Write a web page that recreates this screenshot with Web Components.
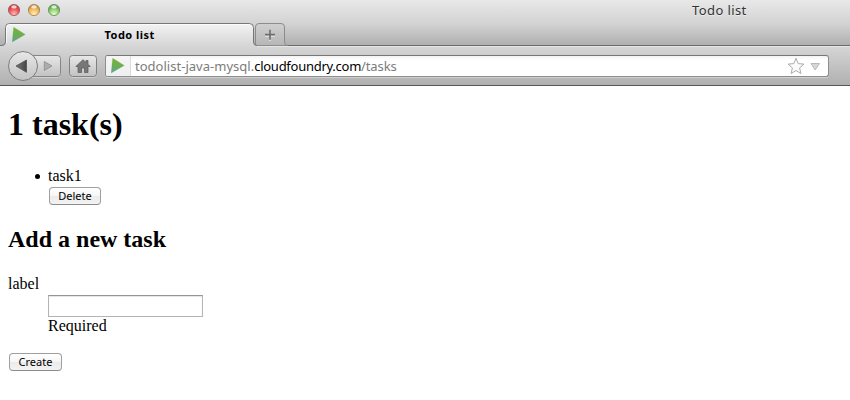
<!DOCTYPE html>
<html lang="en">
<head>
<meta charset="utf-8">
<title>Todo list</title>
<style>
html,body{margin:0;height:100%;background:#fff;overflow:hidden}
</style>
</head>
<body>
<todo-window></todo-window>
<script>
const define = (name, html) => customElements.define(name, class extends HTMLElement {
  constructor() {
    super();
    const t = document.createElement('template');
    t.innerHTML = html;
    this.attachShadow({mode: 'open'}).append(t.content.cloneNode(true));
  }
});

define('play-logo', `
<style>:host{display:block;width:14px;height:16px}svg{display:block}</style>
<svg width="14" height="16" viewBox="0 0 14 16"><defs><linearGradient id="g" x1=".4" y1="0" x2=".3" y2="1"><stop offset="0" stop-color="#79b52c"/><stop offset=".55" stop-color="#6aae55"/><stop offset="1" stop-color="#58a5a5"/></linearGradient></defs>
<path d="M1.700.2 13.200 7.400.200 15Z" fill="url(#g)" stroke="#5f9f4c" stroke-opacity=".5" stroke-width=".5"/></svg>`);

define('title-bar', `
<style>
:host{display:flex;height:23px;box-sizing:border-box;padding-left:8px;align-items:flex-start;font:13px/20px "Noto Sans","Open Sans",sans-serif;color:#333}
svg{display:block;margin-top:3px}
span{margin-left:631px;letter-spacing:.4px;white-space:nowrap;text-shadow:0 1px 0 rgba(255,255,255,.5)}
</style>
<svg width="53" height="14" viewBox="0 0 53 14"><defs>
<radialGradient id="r" cx=".5" cy=".85" r=".85"><stop offset="0" stop-color="#ffbcb8"/><stop offset=".5" stop-color="#ee5c60"/><stop offset="1" stop-color="#b8303a"/></radialGradient>
<radialGradient id="y" cx=".5" cy=".85" r=".85"><stop offset="0" stop-color="#fff3b0"/><stop offset=".5" stop-color="#f4bd66"/><stop offset="1" stop-color="#b87a30"/></radialGradient>
<radialGradient id="g" cx=".5" cy=".85" r=".85"><stop offset="0" stop-color="#e4ffc4"/><stop offset=".5" stop-color="#95d07a"/><stop offset="1" stop-color="#4c8c40"/></radialGradient></defs>
<circle cx="6" cy="7" r="5.600" fill="url(#r)" stroke="#a05054" stroke-width=".8"/>
<circle cx="26" cy="7" r="5.600" fill="url(#y)" stroke="#a47a4c" stroke-width=".8"/>
<circle cx="46" cy="7" r="5.600" fill="url(#g)" stroke="#608c56" stroke-width=".8"/>
<g fill="#fff" fill-opacity=".75"><ellipse cx="6" cy="3.900" rx="2.700" ry="1.600"/><ellipse cx="26" cy="3.900" rx="2.700" ry="1.600"/><ellipse cx="46" cy="3.900" rx="2.700" ry="1.600"/></g></svg>
<span>Todo list</span>`);

define('tab-strip', `
<style>
:host{display:grid;height:24px;grid-template-columns:850px;grid-template-rows:24px;font:bold 11px/23px "Noto Sans","Open Sans",sans-serif;color:#000}
svg,.row{grid-area:1/1}svg{display:block}
.row{display:flex;align-items:flex-start;padding-left:12px}
play-logo{margin-top:3.500px}
.t{margin-left:78.500px;letter-spacing:.480px;white-space:nowrap;line-height:24px}
</style>
<svg width="850" height="24" viewBox="0 0 850 24"><defs>
<linearGradient id="a" x2="0" y2="1"><stop offset="0" stop-color="#f3f3f3"/><stop offset="1" stop-color="#d5d5d5"/></linearGradient>
<linearGradient id="b" x2="0" y2="1"><stop offset="0" stop-color="#d0d0d0"/><stop offset="1" stop-color="#b6b6b6"/></linearGradient></defs>
<path d="M0 23.500H850" stroke="#e5e5e5"/>
<path d="M0 22.500H850" stroke="#6c6c6c"/>
<path d="M255.500 22.500V4q0-3.500 3.500-3.500H281q3.500 0 3.500 3.500V19q0 3.500 3 3.500Z" fill="url(#b)" stroke="#8c8c8c"/>
<path d="M0 24V22.500H2Q5.500 22.500 5.500 19V4.500Q5.500.500 9.500.500H249.500Q253.500.500 253.500 4.500V19Q253.500 22.500 257 22.500V24Z" fill="url(#a)"/>
<path d="M0 22.500H2Q5.500 22.500 5.500 19V4.500Q5.500.500 9.500.500H249.500Q253.500.500 253.500 4.500V19Q253.500 22.500 257 22.500" fill="none" stroke="#777"/>
<path d="M6.500 20V4.500Q6.500 1.500 9.500 1.500H249.500" fill="none" stroke="#fff" stroke-opacity=".7"/>
<path d="M265 12h10M270 7v10" stroke="#ddd" stroke-width="2" transform="translate(0 1)"/>
<path d="M265 11.700h10M270 6.700v10" stroke="#6e6e6e" stroke-width="1.700"/></svg>
<div class="row"><play-logo></play-logo><span class="t">Todo list</span></div>`);

define('nav-buttons', `
<style>:host{display:block;width:97px;height:32px}svg{display:block}</style>
<svg width="97" height="32" viewBox="0 0 97 32"><defs>
<linearGradient id="a" x2="0" y2="1"><stop offset="0" stop-color="#e8e8e8"/><stop offset="1" stop-color="#c2c2c2"/></linearGradient>
<linearGradient id="i" x2="1" y2="0"><stop offset="0" stop-color="#777"/><stop offset="1" stop-color="#444"/></linearGradient></defs>
<path d="M24 5.500H49.500q3 0 3 3V23.500q0 3-3 3H24Z" fill="none" stroke="#fff" stroke-opacity=".35" transform="translate(0 1)"/>
<path d="M24 5.500H49.500q3 0 3 3V23.500q0 3-3 3H24Z" fill="url(#a)" stroke="#858585"/>
<circle cx="15" cy="16" r="14.500" fill="url(#a)" stroke="#7c7c7c"/>
<path d="M8 16 18.500 10V22.300Z" fill="url(#i)" stroke="#505050" stroke-width=".8"/>
<path d="M36.300 11.500 44 16 36.300 20.500Z" fill="#adadad" stroke="#8c8c8c" stroke-width=".8"/>
<rect x="61.500" y="6.500" width="27" height="21" rx="3" fill="none" stroke="#fff" stroke-opacity=".35"/>
<rect x="61.500" y="5.500" width="27" height="21" rx="3" fill="url(#a)" stroke="#808080"/>
<path d="M67.800 16.500 75 9.700 78 12.400V10.500H80V14.200L82.300 16.500H80V22.500H76.500V18H73.500V22.500H70V16.500Z" fill="#777" stroke="#585858" stroke-width=".7"/></svg>`);

define('url-field', `
<style>
:host{display:flex;align-items:stretch;box-sizing:border-box;width:724px;height:22px;border:1px solid #8d8d8d;border-top-color:#777;border-radius:3px;background:linear-gradient(#f3f3f3,#fff 4px);box-shadow:0 1px 0 rgba(255,255,255,.35);overflow:hidden;font:13px/21px "Noto Sans","Open Sans",sans-serif;color:#7c7c7c}
.id{width:25px;box-sizing:border-box;border-right:1px solid #dcdcdc;background:linear-gradient(#f5f5f5,#efefef);padding:2px 0 0 5px}
.u{flex:1;padding-left:4px;white-space:nowrap}
.u span{display:inline-block}.p{letter-spacing:.020px}.d{color:#000;letter-spacing:-.270px}.q{letter-spacing:-.100px}
svg{display:block;margin-right:7px}
</style>
<div class="id"><play-logo></play-logo></div>
<div class="u"><span class="p">todolist-java-mysql.</span><span class="d">cloudfoundry.com</span><span class="q">/tasks</span></div>
<svg width="34" height="20" viewBox="0 0 34 20"><path d="M8.500 2.300 10.700 7.600 16.400 8.100 12.100 11.900 13.400 17.500 8.500 14.500 3.600 17.500 4.900 11.900.600 8.100 6.300 7.600Z" transform="translate(.5 0)" fill="#fbfbfb" stroke="#ababab"/><path d="M24 7.500H32.500L28.200 14Z" fill="#d6d6d6" stroke="#b8b8b8"/></svg>`);

define('nav-bar', `
<style>:host{display:flex;box-sizing:border-box;height:39px;padding-left:8px;border-bottom:1px solid #555;background:linear-gradient(#d5d5d5,#b0b0b0)}
nav-buttons{margin-top:3px}url-field{margin-top:8px}</style>
<nav-buttons></nav-buttons><url-field></url-field>`);

define('aqua-button', `
<style>:host{display:block}
button{display:block;box-sizing:border-box;width:100%;height:18px;margin:0;padding:0;border:1px solid #9f9f9f;border-bottom-color:#8c8c8c;border-radius:4px;background:linear-gradient(#fff,#f6f6f6 48%,#ebebeb 52%,#f3f3f3);font:11px/16px "Noto Sans","Open Sans",sans-serif;color:#000}</style>
<button><slot></slot></button>`);

define('task-page', `
<style>
:host{display:block;padding:0 8px;font:16px/18px "Liberation Serif",serif;color:#000}
h1{font-size:32px;line-height:38px;margin:19px 0 0}
ul{margin:24px 0 0;padding-left:40px;list-style:none}
li::before{content:"";display:inline-block;width:5px;height:5px;border-radius:50%;background:#000;margin:0 8px 2px -13px}
.del{width:52px;margin:2px 0 0 1px}
h2{font-size:24px;line-height:28px;margin:20px 0 0}
dl{margin:22px 0 0}dd{margin:2px 0 0 40px}
input{display:block;box-sizing:border-box;width:155px;height:22px;border:1px solid #b4b4b4;border-top-color:#959595;border-radius:0;margin:0;background:#fff;box-shadow:inset 0 1px 1px #e4e4e4}
.new{width:53px;margin:18px 0 0 1px}
</style>
<h1>1 task(s)</h1>
<ul><li>task1<aqua-button class="del">Delete</aqua-button></li></ul>
<h2>Add a new task</h2>
<dl><dt>label</dt><dd><input aria-label="label">Required</dd></dl>
<aqua-button class="new">Create</aqua-button>`);

define('todo-window', `
<style>
:host{display:block;width:850px;height:400px;background:#fff}
.top{height:47px;background:linear-gradient(#e8e8e8,#d3d3d3 50%,#b0b0b0 45px)}
</style>
<div class="top"><title-bar></title-bar><tab-strip></tab-strip></div>
<nav-bar></nav-bar>
<task-page></task-page>`);
</script>
</body>
</html>
